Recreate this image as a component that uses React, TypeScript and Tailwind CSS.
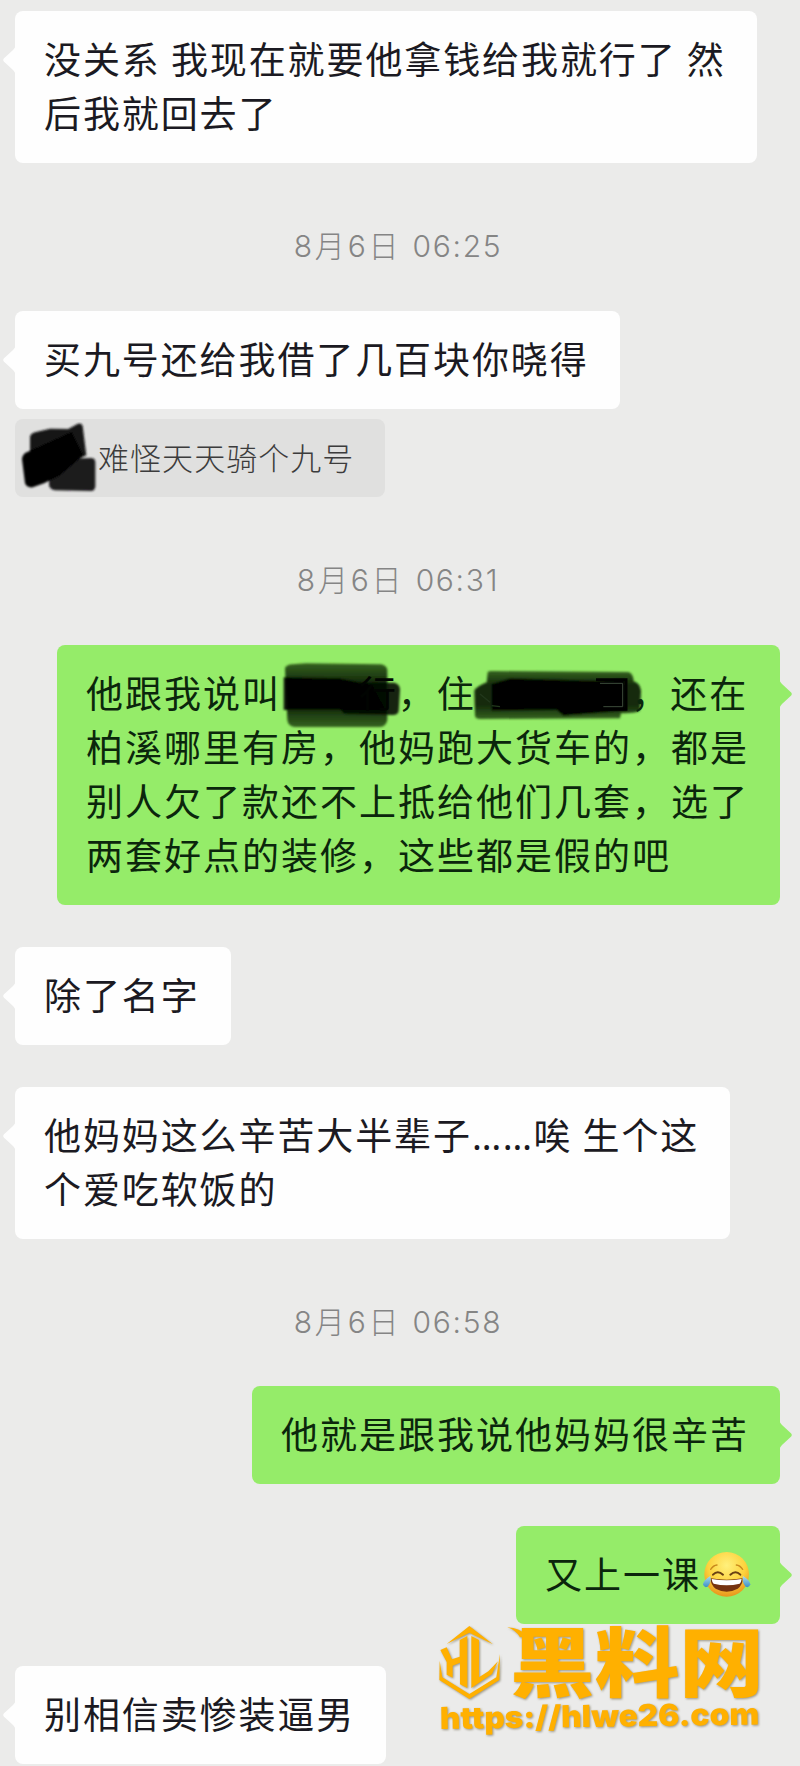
import React from 'react';

interface BubbleProps {
  side: 'left' | 'right';
  lines: React.ReactNode[];
}

const Bubble: React.FC<BubbleProps> = ({ side, lines }) => {
  const mine = side === 'right';

  return (
    <div className={`flex ${mine ? 'justify-end pr-5' : 'pl-[15px]'}`}>
      <div
        className={`relative rounded-[8px] pt-[20px] pb-[24px] pl-[29px] text-[37px] leading-[54px] whitespace-pre ${
          mine
            ? 'bg-[#95ec69] pr-[31px] tracking-[2px] text-[#0b260c]'
            : 'bg-[#fefefe] pr-[31px] tracking-[1.9px] text-[#1b1a22]'
        }`}
      >
        <svg
          className={`absolute top-[34px] h-[30px] w-[14px] ${mine ? '-right-[13px]' : '-left-[13px] -scale-x-100'}`}
          viewBox="0 0 14 30"
        >
          <path
            d="M0 0 Q1 3 3 5 L12.2 13.6 Q13.6 15 12.2 16.4 L3 25 Q1 27 0 30 Z"
            fill={mine ? '#95ec69' : '#fefefe'}
          />
        </svg>
        {lines.map((line, i) => (
          <p key={i} className="h-[54px]">
            {line}
          </p>
        ))}
      </div>
    </div>
  );
};

const TimeStamp: React.FC<{ time: string }> = ({ time }) => (
  <div className="flex h-[148px] items-center justify-center pt-[18px] pr-[4px] text-[30px] leading-[40px] font-light whitespace-pre text-[#858585] font-['Inter','Noto_Sans_CJK_SC',sans-serif]">
    <span className="tracking-[2.8px]">8月6日 </span>
    <span className="tracking-[1.7px]">{time}</span>
  </div>
);

const QuoteScribble: React.FC = () => (
  <svg className="h-[72px] w-[78px]" viewBox="60 400 234 216">
    <defs>
      <filter id="soft">
        <feGaussianBlur stdDeviation="3.2" />
      </filter>
    </defs>
    <g filter="url(#soft)">
      <path d="M90 445 Q92 434 105 431 L150 420 L205 421 L232 406 Q244 402 248 412 L259 500 L160 545 L90 500 Z" fill="#141414" />
      <path d="M150 512 L275 508 Q286 509 286 522 L286 594 Q284 606 274 607 L165 605 Q151 603 147 590 Z" fill="#1c1a1d" />
      <path d="M66 512 Q67 495 82 490 L215 430 L250 500 L180 560 L132 584 L98 596 Q80 598 75 584 Z" fill="#000" />
    </g>
  </svg>
);

// covers three characters
const NameScribble: React.FC = () => (
  <span className="relative inline-block h-[54px] w-[116.7px] align-top">
    <svg className="absolute -top-[5px] left-0 h-[70px] w-[124px]" viewBox="725 90 372 210">
      <defs>
        <linearGradient id="marker" x1="0" y1="0" x2="0" y2="1">
          <stop offset="0" stopColor="#35631f" />
          <stop offset="0.3" stopColor="#142a0b" />
          <stop offset="0.7" stopColor="#142a0b" />
          <stop offset="1" stopColor="#35631f" />
        </linearGradient>
      </defs>
      <g filter="url(#soft)">
        <path d="M737 115 Q740 104 760 103 L800 100 L1025 103 Q1042 106 1044 120 L1044 270 Q1040 290 1022 291 L765 291 Q746 288 744 270 Z" fill="url(#marker)" />
        <path d="M733 142 L900 145 L1000 165 L1040 240 L733 240 Z" fill="#000" fillOpacity="0.9" />
        <path d="M905 175 Q907 160 925 157 L1065 158 Q1081 162 1082 178 L1078 242 Q1076 255 1060 255 L920 252 Q904 248 905 236 Z" fill="#020702" fillOpacity="0.85" />
      </g>
    </svg>
    <span className="absolute top-0 left-[78px] text-[#010401]">行</span>
  </span>
);

// covers four characters
const PlaceScribble: React.FC = () => (
  <span className="relative inline-block h-[54px] w-[155.6px] align-top">
    <svg className="absolute -top-px -left-[6px] h-[60px] w-[176px]" viewBox="150 100 528 180">
      <g filter="url(#soft)">
        <path d="M163 180 Q168 168 200 155 L203 124 Q206 120 220 121 L625 124 Q640 128 641 152 Q660 158 663 180 L660 238 Q655 248 603 248 L600 263 L180 265 Q165 264 165 255 Z" fill="url(#marker)" />
        <path d="M215 160 L270 143 L530 150 L615 145 L618 240 L430 255 L410 238 L215 240 Z" fill="#000" />
      </g>
      <path d="M528 147 H618 V236 H532" fill="none" stroke="#000" strokeWidth="9" />
      <path d="M540 158 H608 V228 H550" fill="none" stroke="#3d4d3b" strokeWidth="3" />
      <path d="M180 190 L210 215 M215 225 L240 228" fill="none" stroke="#22381c" strokeWidth="4" />
    </svg>
  </span>
);

const JoyEmoji: React.FC = () => (
  <svg className="mt-[4px] -mr-[2px] ml-px inline-block h-[48px] w-[49px] align-top" viewBox="605 543 147 144">
    <defs>
      <radialGradient id="face" cx="0.5" cy="0.3" r="0.7">
        <stop offset="0" stopColor="#fff07c" />
        <stop offset="0.6" stopColor="#fdd23c" />
        <stop offset="1" stopColor="#e8951c" />
      </radialGradient>
      <linearGradient id="tear" x1="0" y1="0" x2="0" y2="1">
        <stop offset="0" stopColor="#a9dcf2" />
        <stop offset="1" stopColor="#3b8fc4" />
      </linearGradient>
    </defs>
    <circle cx="679" cy="616" r="67" fill="url(#face)" />
    <path d="M631 601 Q639 589 650 588 M727 601 Q719 589 708 588" fill="none" stroke="#c98a1d" strokeWidth="4" strokeLinecap="round" />
    <path d="M638 617 Q652 602 668 617 M690 617 Q706 602 720 617" fill="none" stroke="#694013" strokeWidth="6" strokeLinecap="round" />
    <path d="M631 628 Q679 636 727 628 Q727 649 712 659 Q679 677 646 659 Q631 649 631 628 Z" fill="#76330f" />
    <path d="M634 630 Q679 638 724 630 Q723 639 718 644 Q679 653 640 644 Q635 639 634 630 Z" fill="#fff" />
    <path d="M630 621 Q634 641 622 653 Q611 658 608 646 Q609 634 630 621 Z" fill="url(#tear)" />
    <path d="M728 621 Q724 641 736 653 Q747 658 750 646 Q749 634 728 621 Z" fill="url(#tear)" />
  </svg>
);

const Watermark: React.FC = () => (
  <svg
    className="absolute top-[1600px] left-[420px] h-[166px] w-[380px] drop-shadow-[1px_1px_1px_rgba(90,80,50,0.55)]"
    viewBox="0 0 1140 498"
    fill="#ffb000"
  >
    <path d="M80 132 L148 78 L219 133 L148 98 Z" />
    <path d="M61 150 L80 142 L96 178 L119 170 L119 120 L142 108 L142 264 L120 253 L120 188 L98 197 L98 233 L80 224 L80 186 Z" />
    <path d="M154 108 L177 120 L177 232 L205 214 L234 184 L216 222 L154 264 Z" />
    <path d="M59 182 L67 232 L148 282 L229 232 L240 162 L238 240 L148 297 L58 240 Z" />
    <path d="M262 82 Q300 84 322 108 L300 112 Q290 92 262 82 Z" />
    <text
      x="270"
      y="274"
      fontSize="229"
      fontWeight="900"
      textLength="762"
      lengthAdjust="spacingAndGlyphs"
      className="font-['Noto_Sans_CJK_SC',sans-serif]"
    >
      黑料网
    </text>
    <text
      x="60"
      y="387"
      fontSize="91"
      fontWeight="900"
      textLength="958"
      lengthAdjust="spacingAndGlyphs"
      transform="rotate(-0.8 60 387)"
      className="font-['Inter',sans-serif]"
    >
      https://hlwe26.com
    </text>
  </svg>
);

const App: React.FC = () => (
  <main className="relative h-[1766px] w-[800px] overflow-hidden bg-[#ebebea] pt-[11px] font-['Noto_Sans_CJK_SC',sans-serif]" lang="zh-CN">
    <Bubble side="left" lines={['没关系 我现在就要他拿钱给我就行了 然', '后我就回去了']} />
    <TimeStamp time="06:25" />
    <Bubble side="left" lines={['买九号还给我借了几百块你晓得']} />
    <div className="mt-[10px] ml-[15px] flex h-[78px] w-[370px] items-center rounded-[8px] bg-[#e0e0df] pl-[5px]">
      <QuoteScribble />
      <span className="-mt-[3px] text-[31px] leading-[40px] font-light tracking-[1.05px] whitespace-nowrap text-[#3c3c3c]">
        难怪天天骑个九号
      </span>
    </div>
    <TimeStamp time="06:31" />
    <div className="flex flex-col gap-[42px]">
      <Bubble
        side="right"
        lines={[
          <>
            他跟我说叫
            <NameScribble />
            ，住
            <PlaceScribble />
            <span className="relative">，</span>
            还在
          </>,
          '柏溪哪里有房，他妈跑大货车的，都是',
          '别人欠了款还不上抵给他们几套，选了',
          '两套好点的装修，这些都是假的吧',
        ]}
      />
      <Bubble side="left" lines={['除了名字']} />
      <Bubble
        side="left"
        lines={[
          <>
            他妈妈这么辛苦大半辈子
            <span className="font-['Noto_Sans',sans-serif] tracking-[1.5px]">……</span>
            唉 生个这
          </>,
          '个爱吃软饭的',
        ]}
      />
    </div>
    <TimeStamp time="06:58" />
    <div className="-mt-px flex flex-col gap-[42px]">
      <Bubble side="right" lines={['他就是跟我说他妈妈很辛苦']} />
      <Bubble
        side="right"
        lines={[
          <>
            又上一课
            <JoyEmoji />
          </>,
        ]}
      />
      <Bubble side="left" lines={['别相信卖惨装逼男']} />
    </div>
    <Watermark />
  </main>
);

export default App;
